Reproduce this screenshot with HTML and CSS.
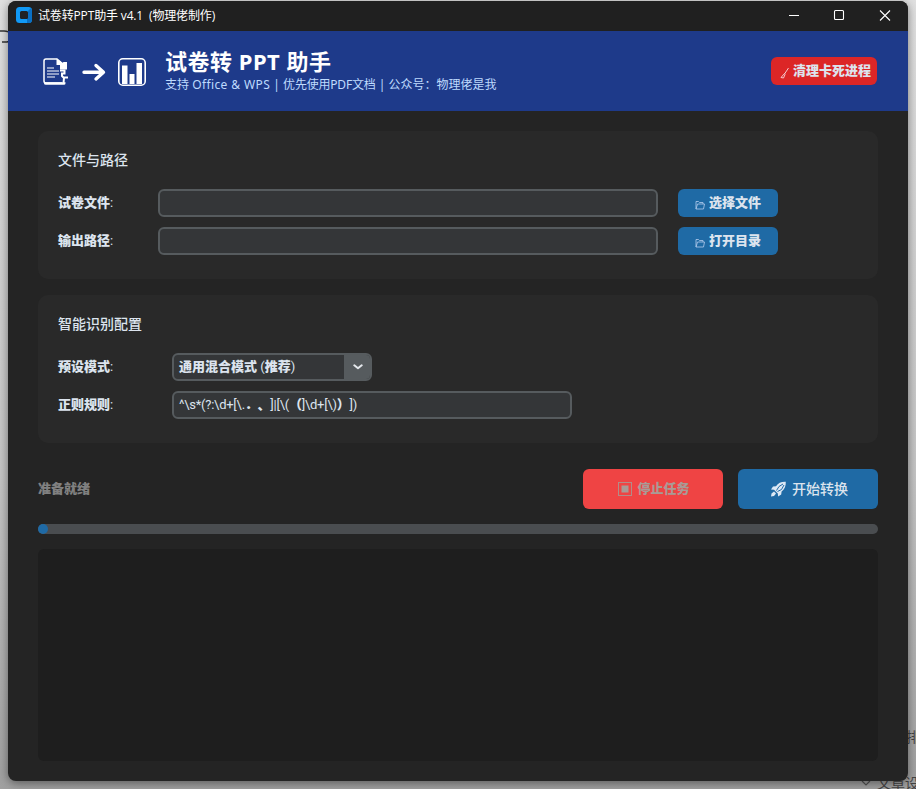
FILE: index.html
```html
<!DOCTYPE html>
<html lang="zh-CN">

<head>
    <meta charset="UTF-8">
    <meta name="viewport" content="width=device-width, initial-scale=1.0">
    <title>试卷转PPT助手 v4.1</title>
    <link rel="stylesheet" href="styles.css">
</head>

<body>
    <!-- Desktop behind the window -->
    <svg class="behind-mark" width="8" height="16" viewBox="0 0 8 16" fill="none" stroke="#333" stroke-width="1.6">
        <path d="M0 2h4q3 0 4 1M2 13h4q2 0 2-1" />
    </svg>
    <div class="behind-side">排</div>
    <div class="behind-bottom">
        <svg width="10" height="8" viewBox="0 0 10 8" fill="none" stroke="#555" stroke-width="1.2"><path d="M1 2l4 4 4-4" /></svg>
        <span>文章设</span>
    </div>

    <div class="window">
        <div class="title-bar">
            <svg class="app-icon" width="16" height="16" viewBox="0 0 16 16">
                <rect width="16" height="16" rx="3.500" fill="#1199f5" />
                <path d="M12 4L15 1q1 1 1 2.500v9a3.500 3.500 0 0 1-3.500 3.500H11v-4z" fill="#0a70c4" />
                <rect x="4" y="4" width="8" height="8" rx="1.500" fill="#202224" />
            </svg>
            <span class="window-title">试卷转PPT助手 v4.1&nbsp; (物理佬制作)</span>
            <svg class="window-controls" width="102" height="12" viewBox="0 0 102 12" fill="none" stroke="#fff" stroke-width="1.100">
                <path d="M0 6.500h10M91 1.500l10 10M101 1.500l-10 10" />
                <rect x="45.500" y="1.500" width="9" height="9" rx="1" />
            </svg>
        </div>

        <div class="header">
            <svg class="logo" width="106" height="30" viewBox="0 0 106 30">
                <path d="M22 26H6q-2 0-2-2V4q0-2 2-2H17l6 5v5" fill="none" stroke="#fff" stroke-width="1.500" />
                <path d="M16.500 1.500V8H20v4.500h7V5h-3.500l-1 1zM4 25.200h21.500v1q0 1.600-1.600 1.600H6q-2 0-2-1.600z" fill="#fff" />
                <path d="M7 11h7M7 14h12M7 17h12M7 20h8" stroke="#fff" stroke-width="1.200" />
                <path d="M20 13.500h4.500v3H22v2.500l1.500 1.500H28M24 21l-.5 5" fill="none" stroke="#fff" stroke-width="2" />
                <path d="M44 15.200h17M56 8.500l7.500 6.700-7.500 6.700" fill="none" stroke="#fff" stroke-width="3.400" stroke-linecap="round" stroke-linejoin="round" />
                <rect x="78.800" y="1.800" width="26.400" height="26.400" rx="4" fill="none" stroke="#fff" stroke-width="1.600" />
                <path d="M82 8.500h5.500V27H82zM89.500 17h5v10h-5zM96.500 6h5.500v21h-5.500z" fill="#fff" />
            </svg>
            <div class="heading">
                <h1>试卷转 PPT 助手</h1>
                <p>支持 <span class="apps">Office &amp; WPS</span> | <span class="pdf-tip">优先使用PDF文档</span> | 公众号：物理佬是我</p>
            </div>
            <button class="btn clean-button">
                <svg width="9" height="12" viewBox="0 0 9 12" fill="none" stroke="#f4c8cc" stroke-width="1"><path d="M8.500 1L4.500 7M4.500 6.500L1 10.500l2.500.5L5 7.500z" /></svg>
                <span>清理卡死进程</span>
            </button>
        </div>

        <div class="content">
            <div class="card">
                <h2>文件与路径</h2>
                <div class="row">
                    <label for="paper"><b>试卷文件</b>:</label>
                    <input type="text" id="paper" class="path-input">
                    <button class="btn file-button">
                        <svg width="10" height="10" viewBox="0 0 10 10" fill="none" stroke="#b4cbee" stroke-width=".8"><path d="M1 9V1.500h2.500l1 1H8V4M1 9l1.500-5h7L8.500 9z" /></svg>
                        <span>选择文件</span>
                    </button>
                </div>
                <div class="row">
                    <label for="output"><b>输出路径</b>:</label>
                    <input type="text" id="output" class="path-input">
                    <button class="btn file-button">
                        <svg width="10" height="10" viewBox="0 0 10 10" fill="none" stroke="#b4cbee" stroke-width=".8"><path d="M1 9V1.500h2.500l1 1H8V4M1 9l1.500-5h7L8.500 9z" /></svg>
                        <span>打开目录</span>
                    </button>
                </div>
            </div>

            <div class="card config">
                <h2>智能识别配置</h2>
                <div class="row">
                    <label><b>预设模式</b>:</label>
                    <div class="select">
                        <div class="select-text"><b>通用混合模式</b> (<b>推荐</b>)</div>
                        <div class="select-arrow">
                            <svg width="10" height="6" viewBox="0 0 10 6" fill="none" stroke="#e4e8ec" stroke-width="2" stroke-linecap="round" stroke-linejoin="round"><path d="M1.300 1.300L5 4.300l3.700-3" /></svg>
                        </div>
                    </div>
                </div>
                <div class="row">
                    <label><b>正则规则</b>:</label>
                    <div class="regex">^\s*(?:\d+[\.<b>．、</b>]|[\(<b>（</b>]\d+[\)<b>）</b>])</div>
                </div>
            </div>

            <div class="actions">
                <span class="status">准备就绪</span>
                <button class="btn stop-button" disabled>
                    <svg width="14" height="14" viewBox="0 0 14 14"><rect x=".5" y=".5" width="13" height="13" fill="none" stroke="#b28c88" /><rect x="3.500" y="3.500" width="7" height="7" fill="#a99b96" /></svg>
                    <span>停止任务</span>
                </button>
                <button class="btn start-button">
                    <svg width="17" height="16" viewBox="0 0 17 16">
                        <path d="M15.800.8C11.500.5 8.300 2 6 5.200L3 5.500 1 8.500l3 .2 3.800 3.800.4 3 3-2 .4-3C14.500 8.400 16 5 15.800.8z" fill="#dce8f5" />
                        <path d="M4 10.500L1.500 12.500 1 15.500l3-.5 2-2.500z" fill="#dce8f5" />
                        <path d="M6.500 9.500l2.500-4 4-2.500M7.500 10.500l4-2 2.500-4.500" fill="none" stroke="#1f6aa5" stroke-width="1" />
                    </svg>
                    <span>开始转换</span>
                </button>
            </div>

            <div class="progress"><div class="progress-fill"></div></div>
            <div class="log"></div>
        </div>
    </div>
</body>

</html>
```
FILE: styles.css
```css
* {
    box-sizing: border-box;
}

body {
    margin: 0;
    padding: 1px 8px 8px;
    height: 789px;
    overflow: hidden;
    position: relative;
    font-family: Roboto, "Noto Sans CJK SC", sans-serif;
    font-size: 13px;
    color: #dce4ee;
    background: linear-gradient(#e0e0e0, #c4c4c4 60%, #a0a0a0);
}

.behind-mark {
    position: absolute;
    left: 0;
    top: 29px;
}

.behind-side {
    position: absolute;
    left: 906px;
    top: 727px;
    color: #444;
    font-size: 14px;
    line-height: 20px;
}

.behind-bottom {
    position: absolute;
    left: 861px;
    top: 775px;
    display: flex;
    align-items: center;
    gap: 6px;
    color: #444;
    font-size: 14px;
    line-height: 16px;
    white-space: nowrap;
}

.window {
    position: relative;
    width: 900px;
    height: 780px;
    background-color: #242424;
    border-radius: 8px;
    overflow: hidden;
    box-shadow: 0 2px 10px rgba(0, 0, 0, 0.45);
}

.title-bar {
    display: flex;
    align-items: center;
    height: 30px;
    padding: 0 17px 2px 8px;
    background-color: #202020;
}

.window-title {
    flex: 1;
    margin-left: 6px;
    font-family: "Open Sans", "Noto Sans CJK SC", sans-serif;
    font-size: 12px;
    letter-spacing: -0.15px;
    color: #fff;
}

.header {
    display: flex;
    align-items: center;
    height: 80px;
    padding: 0 31px 0 32px;
    background-color: #1e3a8a;
}

.logo {
    margin-top: 2px;
}

.heading {
    flex: 1;
    margin-left: 19px;
    font-family: "Noto Sans", "Noto Sans CJK SC", sans-serif;
    white-space: nowrap;
}

h1 {
    margin: 0;
    font-size: 22px;
    line-height: 28px;
    letter-spacing: 0.5px;
    color: #fff;
}

p {
    margin: 0;
    font-size: 12px;
    line-height: 20px;
    color: #bfdbfe;
}

.apps {
    letter-spacing: 0.4px;
}

.pdf-tip {
    letter-spacing: -0.2px;
}

.btn {
    display: flex;
    align-items: center;
    justify-content: center;
    padding: 0;
    border: none;
    border-radius: 6px;
    font-family: "Noto Sans CJK SC", sans-serif;
    font-size: 13px;
    font-weight: 900;
    color: #dce4ee;
    background-color: #1f6aa5;
}

.btn span {
    margin-bottom: 3px;
}

.clean-button {
    width: 106px;
    height: 28px;
    padding-left: 3px;
    gap: 4px;
    background-color: #dc2626;
}

.clean-button svg,
.file-button svg {
    margin-top: 4px;
}

.content {
    padding: 20px 30px;
}

.card {
    height: 148px;
    padding: 19px 20px;
    border-radius: 10px;
    background-color: #292929;
}

.config {
    margin-top: 16px;
}

h2 {
    margin: 0 0 18px;
    font-size: 14px;
    font-weight: 500;
    line-height: 21px;
}

.row {
    display: flex;
    align-items: center;
    height: 28px;
    margin-bottom: 10px;
}

b {
    font-weight: 900;
}

label {
    width: 100px;
    padding-bottom: 3px;
}

.config label {
    width: 114px;
}

.path-input,
.select,
.regex {
    height: 28px;
    border: 2px solid #565b5e;
    border-radius: 6px;
    background-color: #343638;
}

.path-input {
    width: 500px;
    color: #dce4ee;
}

.file-button {
    width: 100px;
    height: 28px;
    margin-left: 20px;
    gap: 4px;
}

.select {
    display: flex;
    width: 200px;
    overflow: hidden;
}

.select-text {
    flex: 1;
    padding-left: 5px;
    line-height: 24px;
}

.select-arrow {
    display: flex;
    align-items: center;
    justify-content: center;
    width: 26px;
    padding-left: 2px;
    background-color: #565b5e;
}

.regex {
    width: 400px;
    padding-left: 5px;
    line-height: 24px;
    letter-spacing: -0.25px;
    text-spacing-trim: space-all;
}

.actions {
    display: flex;
    align-items: center;
    margin-top: 26px;
}

.status {
    flex: 1;
    padding-bottom: 3px;
    font-weight: 900;
    color: #808080;
}

.stop-button {
    width: 140px;
    height: 40px;
    padding-left: 2px;
    gap: 5px;
    color: #a99b96;
    background-color: #ef4444;
}

.start-button {
    width: 140px;
    height: 40px;
    margin-left: 15px;
    padding-left: 2px;
    gap: 5px;
    font-size: 14px;
    font-weight: 500;
}

.progress {
    height: 10px;
    margin-top: 15px;
    border-radius: 5px;
    background-color: #4a4d50;
}

.progress-fill {
    width: 10px;
    height: 10px;
    border-radius: 5px;
    background-color: #1f6aa5;
}

.log {
    height: 212px;
    margin-top: 15px;
    border-radius: 6px;
    background-color: #1e1e1e;
}
```
